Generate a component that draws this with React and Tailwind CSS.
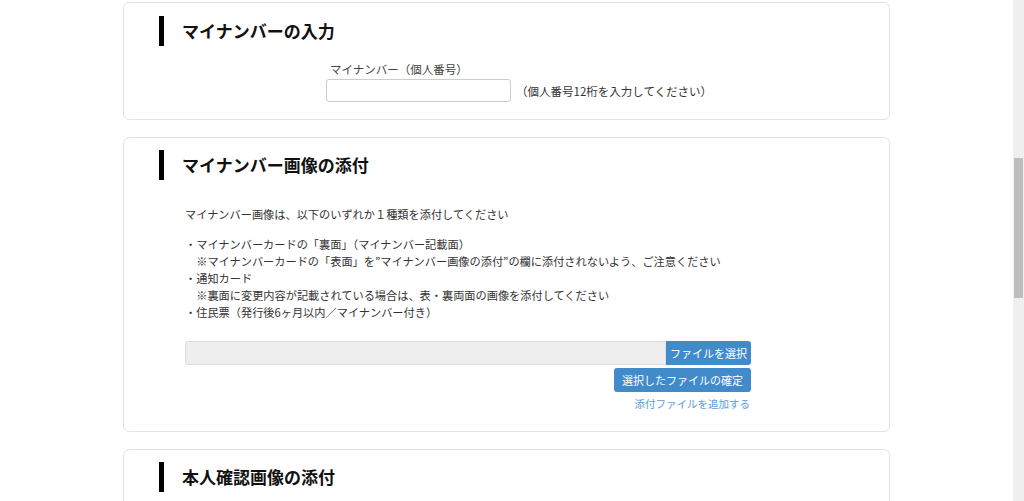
export default function App() {
  const f = { fontFamily: '"Noto Sans CJK JP", "Noto Sans", sans-serif' };
  const Head = ({ children }) => (
    <div className="flex items-center h-[30px]">
      <div className="w-[5px] h-[30px] bg-black ml-[35px]" />
      <div className="ml-[18px] text-[17px] font-bold text-[#111]">{children}</div>
    </div>
  );
  return (
    <div className="flex h-[501px] overflow-hidden bg-white text-[#333]" style={f}>
      <div className="flex-1 flex flex-col items-center pt-[2px]">
        <div className="w-[767px] ml-[0px] flex flex-col gap-[17px]">
          <div className="h-[118px] border border-[#e3e3e3] rounded-[6px] pt-[13px]">
            <Head>マイナンバーの入力</Head>
            <div className="ml-[202px] mt-[14px]">
              <div className="text-[11.5px] text-[#444] ml-[4px] leading-[18px]">マイナンバー（個人番号）</div>
              <div className="flex items-center mt-[1px]">
                <div className="w-[185px] h-[23px] border border-[#ccc] rounded-[3px]" />
                <div className="text-[11.5px] ml-[5px] pt-[3px]">（個人番号12桁を入力してください）</div>
              </div>
            </div>
          </div>
          <div className="h-[295px] border border-[#e3e3e3] rounded-[6px] pt-[12px]">
            <Head>マイナンバー画像の添付</Head>
            <div className="ml-[61px] mt-[26px] text-[11.2px] leading-[17px]">
              <div>マイナンバー画像は、以下のいずれか１種類を添付してください</div>
              <div className="mt-[13px]">・マイナンバーカードの「裏面」（マイナンバー記載面）</div>
              <div>　※マイナンバーカードの「表面」を”マイナンバー画像の添付”の欄に添付されないよう、ご注意ください</div>
              <div>・通知カード</div>
              <div>　※裏面に変更内容が記載されている場合は、表・裏両面の画像を添付してください</div>
              <div>・住民票（発行後6ヶ月以内／マイナンバー付き）</div>
              <div className="w-[566px] mt-[20px] flex flex-col items-end">
                <div className="flex w-full h-[24px]">
                  <div className="flex-1 bg-[#eee] border border-[#ddd] rounded-l-[3px]" />
                  <div className="w-[85px] bg-[#428bca] text-white text-[11px] flex items-center justify-center rounded-r-[3px]">ファイルを選択</div>
                </div>
                <div className="mt-[3px] h-[24px] px-[8px] bg-[#428bca] text-white text-[11px] flex items-center rounded-[3px]">選択したファイルの確定</div>
                <div className="mt-[3px] text-[10.5px] text-[#5b9bd5] mr-[1px]">添付ファイルを追加する</div>
              </div>
            </div>
          </div>
          <div className="h-[80px] border border-[#e3e3e3] rounded-[6px] pt-[12px]">
            <Head>本人確認画像の添付</Head>
          </div>
        </div>
      </div>
      <div className="w-[11px] bg-[#f0f0f0] pt-[158px]">
        <div className="h-[140px] bg-[#bdbdbd] mx-[1px]" />
      </div>
    </div>
  );
}
